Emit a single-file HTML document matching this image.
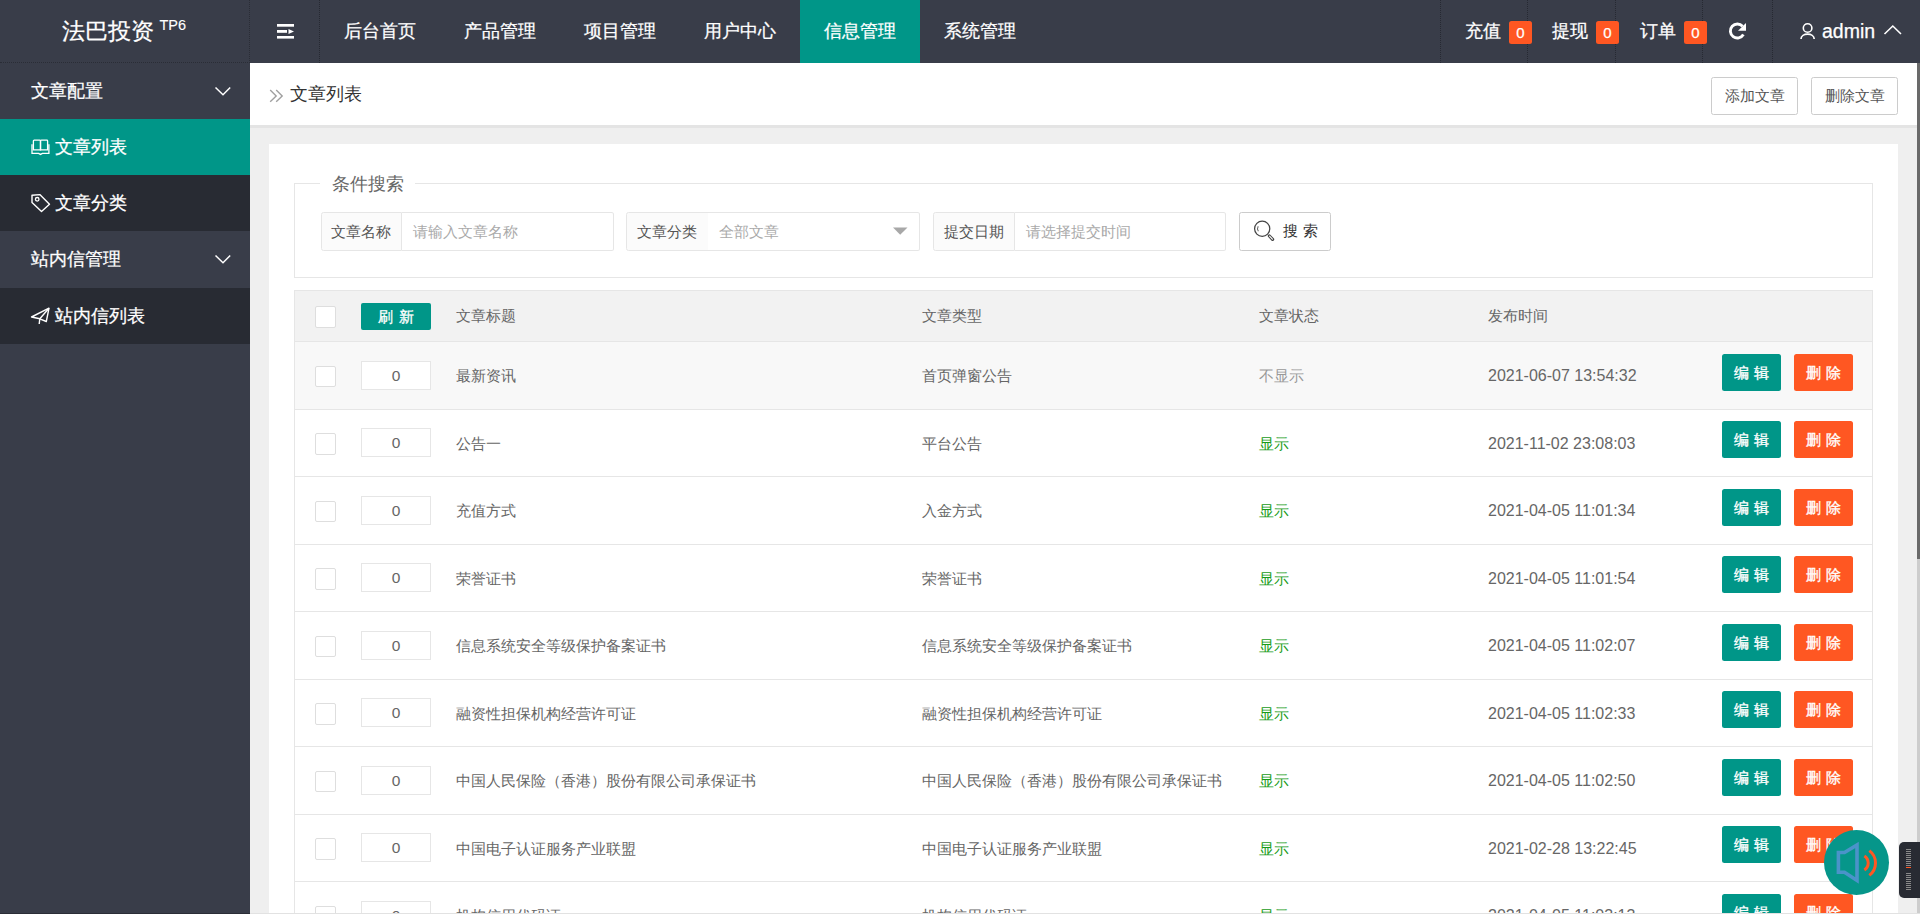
<!DOCTYPE html>
<html><head><meta charset="utf-8">
<style>
*{margin:0;padding:0;box-sizing:border-box}
html,body{width:1920px;height:914px;overflow:hidden}
body{position:relative;background:#efefef;font-family:"Liberation Sans",sans-serif;color:#666}
#hdr,#side{-webkit-text-stroke:0.25px currentColor}
.abs{position:absolute}
#hdr{left:0;top:0;width:1920px;height:62.5px;background:#393d49}
#logo{left:0;top:0;width:250px;height:62.5px;border-right:1px dotted #2a2d36;border-bottom:1px dotted #2a2d36}
#logo .t{position:absolute;left:62px;top:17px;font-size:23px;line-height:28px;color:#fff;white-space:nowrap}
#logo sup{position:absolute;left:97.5px;top:1px;font-size:14.5px;line-height:15px;-webkit-text-stroke:0.1px #fff}
.nav{top:0;height:62.5px;line-height:62.5px;color:#fff;font-size:17.5px;text-align:center;white-space:nowrap}
.sep{position:absolute;top:0;width:1px;height:62.5px;border-left:1px dotted #262932}
#side{left:0;top:62.5px;width:250px;height:851.5px;background:#393d49}
.si{position:absolute;left:0;width:250px;height:56.25px;line-height:56.25px;color:#fff;font-size:17.5px;white-space:nowrap}
.si .tx{position:absolute;left:31px;top:0}
.si.child .tx{left:55px}
.si svg{position:absolute}
#bc{left:250px;top:62.5px;width:1667px;height:62.5px;background:#fff}
#bcb{left:250px;top:125px;width:1667px;height:3px;background:#e4e4e4}
.btn-o{position:absolute;top:14.5px;height:38px;width:87px;border:1px solid #cccccc;border-radius:2.5px;background:#fff;color:#555;font-size:15px;line-height:36px;text-align:center;white-space:nowrap}
#scroll{left:1917px;top:62.5px;width:3px;height:851.5px;background:#cdcdcd}
#thumb{left:1917px;top:62.5px;width:3px;height:496px;background:#6a6a6a}
.badge{position:absolute;top:21px;width:23px;height:23px;background:#ff5722;border-radius:2.5px;color:#fff;font-size:15px;line-height:23px;text-align:center}

.lab{position:absolute;top:211.5px;height:39px;border:1px solid #e6e6e6;border-radius:2.5px 0 0 2.5px;background:#fbfbfb;color:#555;font-size:15px;line-height:37px;text-align:center;white-space:nowrap}
.inp{position:absolute;top:211.5px;height:39px;border:1px solid #e6e6e6;border-left:none;border-radius:0 2.5px 2.5px 0;background:#fff;color:#aaa;font-size:15px;line-height:37px;padding-left:11px;white-space:nowrap}
.cb{position:absolute;width:21.5px;height:21.5px;border:1px solid #dedede;border-radius:2px;background:#fff}
.th{position:absolute;top:290px;line-height:52px;font-size:15px;color:#666;white-space:nowrap}
.td{position:absolute;margin-top:0.8px;line-height:67.5px;font-size:15px;color:#666;white-space:nowrap}
.dt{font-size:16px}
.si0{position:absolute;width:70px;height:29px;border:1px solid #e6e6e6;background:#fff;font-size:15.5px;line-height:27px;text-align:center;color:#666}
.bt{position:absolute;margin-top:0.6px;width:59px;height:37px;border-radius:2.5px;color:#fff;font-size:15px;line-height:37px;text-align:center;letter-spacing:5px;padding-left:5px;white-space:nowrap;-webkit-text-stroke:0.35px #fff}
#card{left:268.75px;top:143.75px;width:1629.5px;height:800px;background:#fff}
</style></head><body>

<div id="hdr" class="abs">
  <div id="logo" class="abs"><div class="t">法巴投资<sup>TP6</sup></div></div>
  <div class="sep" style="left:319px"></div>
  <svg class="abs" style="left:277px;top:24px" width="17" height="15" viewBox="0 0 17 15">
    <rect x="0" y="0" width="17" height="2.7" fill="#fff"/>
    <rect x="0" y="6" width="10" height="2.8" fill="#fff"/>
    <path d="M11.5 5 L17 7.4 L11.5 9.9 Z" fill="#fff"/>
    <rect x="0" y="12" width="17" height="2.6" fill="#fff"/>
  </svg>
  <div class="nav abs" style="left:320px;width:120px">后台首页</div>
  <div class="nav abs" style="left:440px;width:120px">产品管理</div>
  <div class="nav abs" style="left:560px;width:120px">项目管理</div>
  <div class="nav abs" style="left:680px;width:120px">用户中心</div>
  <div class="nav abs" style="left:800px;width:120px;background:#009688">信息管理</div>
  <div class="nav abs" style="left:920px;width:120px">系统管理</div>
  <div class="sep" style="left:1440px"></div>
  <div class="sep" style="left:1527px"></div>
  <div class="sep" style="left:1615px"></div>
  <div class="sep" style="left:1702px"></div>
  <div class="sep" style="left:1772px"></div>
  <div class="abs" style="left:1465px;top:0;line-height:62.5px;font-size:17.5px;color:#fff;white-space:nowrap">充值</div>
  <div class="badge" style="left:1509px">0</div>
  <div class="abs" style="left:1552px;top:0;line-height:62.5px;font-size:17.5px;color:#fff;white-space:nowrap">提现</div>
  <div class="badge" style="left:1596px">0</div>
  <div class="abs" style="left:1640px;top:0;line-height:62.5px;font-size:17.5px;color:#fff;white-space:nowrap">订单</div>
  <div class="badge" style="left:1684px">0</div>
  <svg class="abs" style="left:1727px;top:21px" width="22" height="20" viewBox="0 0 22 20">
    <path d="M16.4 13.5 A7 7 0 1 1 15.6 5.3" fill="none" stroke="#fff" stroke-width="2.9"/>
    <path d="M19 2 L19 9.7 L11 9.7 Z" fill="#fff"/>
  </svg>
  <svg class="abs" style="left:1799px;top:21px" width="18" height="20" viewBox="0 0 18 20">
    <circle cx="8.6" cy="7" r="4.3" fill="none" stroke="#fff" stroke-width="1.6"/>
    <path d="M2 18 C2 11.5 15.2 11.5 15.2 18" fill="none" stroke="#fff" stroke-width="1.7"/>
  </svg>
  <div class="abs" style="left:1822px;top:0;line-height:62.5px;font-size:19.5px;color:#fff">admin</div>
  <svg class="abs" style="left:1883px;top:24px" width="20" height="12" viewBox="0 0 20 12"><path d="M1.5 10 L9.8 2 L18 10" fill="none" stroke="#fff" stroke-width="1.6"/></svg>
</div>


<div id="side" class="abs">
  <div class="si" style="top:0"><span class="tx">文章配置</span>
    <svg style="left:214px;top:23px" width="18" height="10" viewBox="0 0 18 10"><path d="M1.5 1.5 L9 8.7 L16.2 1.5" fill="none" stroke="#fff" stroke-width="1.5"/></svg>
  </div>
  <div class="si child" style="top:56.25px;background:#009688"><span class="tx">文章列表</span><svg style="left:30px;top:20px" width="21" height="17" viewBox="0 0 21 17">
<path d="M3.4 2 Q3.4 1.2 4.2 1.2 L9.6 1.2 Q10.5 1.2 10.5 2 L10.5 10.8 L3.4 10.8 Z" fill="none" stroke="#fff" stroke-width="1.3"/>
<path d="M10.5 2 Q10.5 1.2 11.4 1.2 L16.8 1.2 Q17.6 1.2 17.6 2 L17.6 10.8 L10.5 10.8 Z" fill="none" stroke="#fff" stroke-width="1.3"/>
<path d="M2 5.3 L2 14.4 L8.6 14.4 L10.5 15.4 L12.4 14.4 L18.9 14.4 L18.9 5.3" fill="none" stroke="#fff" stroke-width="1.3"/>
</svg></div>
  <div class="si child" style="top:112.5px;background:#282b33"><span class="tx">文章分类</span><svg style="left:30px;top:18px" width="22" height="20" viewBox="0 0 22 20">
<path d="M2 2.2 L9.8 1.6 L19.5 11.2 L11.5 18.6 L2 9.4 Z" fill="none" stroke="#fff" stroke-width="1.4" stroke-linejoin="round"/>
<circle cx="7.2" cy="6.3" r="1.8" fill="none" stroke="#fff" stroke-width="1.3"/>
</svg></div>
  <div class="si" style="top:168.75px"><span class="tx">站内信管理</span>
    <svg style="left:214px;top:23px" width="18" height="10" viewBox="0 0 18 10"><path d="M1.5 1.5 L9 8.7 L16.2 1.5" fill="none" stroke="#fff" stroke-width="1.5"/></svg>
  </div>
  <div class="si child" style="top:225px;background:#282b33"><span class="tx">站内信列表</span><svg style="left:30px;top:19px" width="22" height="18" viewBox="0 0 22 18">
<path d="M1.5 10 L19 1.2 L16.3 14.5 L9.8 11.8 Z" fill="none" stroke="#fff" stroke-width="1.4" stroke-linejoin="round"/>
<path d="M9.8 11.8 L19 1.2 M9.8 11.8 L9.2 17" fill="none" stroke="#fff" stroke-width="1.4"/>
</svg></div>
</div>

<div id="bc" class="abs">
<svg class="abs" style="left:19px;top:26px" width="16" height="14" viewBox="0 0 16 14">
<path d="M1.2 1 L7.2 6.9 L1.2 12.8 M7.2 1 L13.2 6.9 L7.2 12.8" fill="none" stroke="#a0a0a0" stroke-width="1.4"/>
</svg>
  <div class="abs" style="left:40px;top:0;line-height:62.5px;font-size:18px;color:#333">文章列表</div>
  <div class="btn-o" style="left:1461px">添加文章</div>
  <div class="btn-o" style="left:1561px">删除文章</div>
</div>
<div id="bcb" class="abs"></div>
<div id="scroll" class="abs"></div>
<div id="thumb" class="abs"></div>

<div id="card" class="abs"></div>

<div class="abs" style="left:293.75px;top:183px;width:1578.75px;height:95px;border:1px solid #e6e6e6"></div>
<div class="abs" style="left:320px;top:170px;width:95px;height:26px;background:#fff"></div>
<div class="abs" style="left:332px;top:170px;font-size:18px;line-height:28px;color:#666">条件搜索</div>

<div class="lab" style="left:320.5px;width:81.5px">文章名称</div>
<div class="inp" style="left:401.5px;width:212px">请输入文章名称</div>
<div class="lab" style="left:626px;width:82.5px">文章分类</div>
<div class="inp" style="left:708px;width:211.5px">全部文章</div>
<svg class="abs" style="left:893px;top:227px" width="15" height="8" viewBox="0 0 15 8"><path d="M0 0.5 L14.5 0.5 L7.2 7.8 Z" fill="#a8a8a8"/></svg>
<div class="lab" style="left:933px;width:81.5px">提交日期</div>
<div class="inp" style="left:1014.5px;width:211px">请选择提交时间</div>
<div class="abs" style="left:1239px;top:211.5px;width:91.75px;height:39px;border:1px solid #cccccc;border-radius:2.5px;background:#fff"></div>
<svg class="abs" style="left:1252px;top:219px" width="24" height="24" viewBox="0 0 24 24">
  <circle cx="10.2" cy="9.8" r="7.6" fill="none" stroke="#444" stroke-width="1.25"/>
  <path d="M6.2 7.3 A4.6 4.6 0 0 0 6.4 12.3" fill="none" stroke="#666" stroke-width="1.1"/>
  <path d="M17.4 17 L20.6 20.4" fill="none" stroke="#444" stroke-width="3.2" stroke-linecap="round"/>
  <path d="M17.6 17.2 L20.4 20.2" fill="none" stroke="#fff" stroke-width="1.1" stroke-linecap="round"/>
</svg>
<div class="abs" style="left:1283px;top:216px;font-size:15px;line-height:30px;color:#333;letter-spacing:4.5px;white-space:nowrap">搜索</div>

<div class="abs" style="left:293.75px;top:290px;width:1578.75px;height:52px;background:#f2f2f2;border:1px solid #e6e6e6;border-bottom:none"></div>
<div class="cb" style="left:314.5px;top:306px"></div>
<div class="abs" style="left:361px;top:303px;width:70px;height:27px;background:#009688;border-radius:2px;color:#fff;font-size:15px;line-height:27px;text-align:center;letter-spacing:6px;padding-left:6px;-webkit-text-stroke:0.3px #fff">刷新</div>
<div class="th" style="left:456px">文章标题</div>
<div class="th" style="left:922px">文章类型</div>
<div class="th" style="left:1259px">文章状态</div>
<div class="th" style="left:1488px">发布时间</div>
<div class="abs" style="left:293.75px;top:341.40px;width:1578.75px;height:67.5px;background:#f8f8f8;border:1px solid #e6e6e6;border-bottom:none"></div>
<div class="cb" style="left:314.5px;top:365.80px"></div>
<div class="si0" style="left:361px;top:360.90px">0</div>
<div class="td" style="left:456px;top:341.40px">最新资讯</div>
<div class="td" style="left:922px;top:341.40px">首页弹窗公告</div>
<div class="td" style="left:1259px;top:341.40px;color:#999">不显示</div>
<div class="td dt" style="left:1488px;top:341.40px">2021-06-07 13:54:32</div>
<div class="bt" style="left:1722px;top:353.40px;background:#009688">编辑</div>
<div class="bt" style="left:1794px;top:353.40px;background:#ff5722">删除</div>
<div class="abs" style="left:293.75px;top:408.90px;width:1578.75px;height:67.5px;background:#fff;border:1px solid #e6e6e6;border-bottom:none"></div>
<div class="cb" style="left:314.5px;top:433.30px"></div>
<div class="si0" style="left:361px;top:428.40px">0</div>
<div class="td" style="left:456px;top:408.90px">公告一</div>
<div class="td" style="left:922px;top:408.90px">平台公告</div>
<div class="td" style="left:1259px;top:408.90px;color:#189c18">显示</div>
<div class="td dt" style="left:1488px;top:408.90px">2021-11-02 23:08:03</div>
<div class="bt" style="left:1722px;top:420.90px;background:#009688">编辑</div>
<div class="bt" style="left:1794px;top:420.90px;background:#ff5722">删除</div>
<div class="abs" style="left:293.75px;top:476.40px;width:1578.75px;height:67.5px;background:#fff;border:1px solid #e6e6e6;border-bottom:none"></div>
<div class="cb" style="left:314.5px;top:500.80px"></div>
<div class="si0" style="left:361px;top:495.90px">0</div>
<div class="td" style="left:456px;top:476.40px">充值方式</div>
<div class="td" style="left:922px;top:476.40px">入金方式</div>
<div class="td" style="left:1259px;top:476.40px;color:#189c18">显示</div>
<div class="td dt" style="left:1488px;top:476.40px">2021-04-05 11:01:34</div>
<div class="bt" style="left:1722px;top:488.40px;background:#009688">编辑</div>
<div class="bt" style="left:1794px;top:488.40px;background:#ff5722">删除</div>
<div class="abs" style="left:293.75px;top:543.90px;width:1578.75px;height:67.5px;background:#fff;border:1px solid #e6e6e6;border-bottom:none"></div>
<div class="cb" style="left:314.5px;top:568.30px"></div>
<div class="si0" style="left:361px;top:563.40px">0</div>
<div class="td" style="left:456px;top:543.90px">荣誉证书</div>
<div class="td" style="left:922px;top:543.90px">荣誉证书</div>
<div class="td" style="left:1259px;top:543.90px;color:#189c18">显示</div>
<div class="td dt" style="left:1488px;top:543.90px">2021-04-05 11:01:54</div>
<div class="bt" style="left:1722px;top:555.90px;background:#009688">编辑</div>
<div class="bt" style="left:1794px;top:555.90px;background:#ff5722">删除</div>
<div class="abs" style="left:293.75px;top:611.40px;width:1578.75px;height:67.5px;background:#fff;border:1px solid #e6e6e6;border-bottom:none"></div>
<div class="cb" style="left:314.5px;top:635.80px"></div>
<div class="si0" style="left:361px;top:630.90px">0</div>
<div class="td" style="left:456px;top:611.40px">信息系统安全等级保护备案证书</div>
<div class="td" style="left:922px;top:611.40px">信息系统安全等级保护备案证书</div>
<div class="td" style="left:1259px;top:611.40px;color:#189c18">显示</div>
<div class="td dt" style="left:1488px;top:611.40px">2021-04-05 11:02:07</div>
<div class="bt" style="left:1722px;top:623.40px;background:#009688">编辑</div>
<div class="bt" style="left:1794px;top:623.40px;background:#ff5722">删除</div>
<div class="abs" style="left:293.75px;top:678.90px;width:1578.75px;height:67.5px;background:#fff;border:1px solid #e6e6e6;border-bottom:none"></div>
<div class="cb" style="left:314.5px;top:703.30px"></div>
<div class="si0" style="left:361px;top:698.40px">0</div>
<div class="td" style="left:456px;top:678.90px">融资性担保机构经营许可证</div>
<div class="td" style="left:922px;top:678.90px">融资性担保机构经营许可证</div>
<div class="td" style="left:1259px;top:678.90px;color:#189c18">显示</div>
<div class="td dt" style="left:1488px;top:678.90px">2021-04-05 11:02:33</div>
<div class="bt" style="left:1722px;top:690.90px;background:#009688">编辑</div>
<div class="bt" style="left:1794px;top:690.90px;background:#ff5722">删除</div>
<div class="abs" style="left:293.75px;top:746.40px;width:1578.75px;height:67.5px;background:#fff;border:1px solid #e6e6e6;border-bottom:none"></div>
<div class="cb" style="left:314.5px;top:770.80px"></div>
<div class="si0" style="left:361px;top:765.90px">0</div>
<div class="td" style="left:456px;top:746.40px">中国人民保险（香港）股份有限公司承保证书</div>
<div class="td" style="left:922px;top:746.40px">中国人民保险（香港）股份有限公司承保证书</div>
<div class="td" style="left:1259px;top:746.40px;color:#189c18">显示</div>
<div class="td dt" style="left:1488px;top:746.40px">2021-04-05 11:02:50</div>
<div class="bt" style="left:1722px;top:758.40px;background:#009688">编辑</div>
<div class="bt" style="left:1794px;top:758.40px;background:#ff5722">删除</div>
<div class="abs" style="left:293.75px;top:813.90px;width:1578.75px;height:67.5px;background:#fff;border:1px solid #e6e6e6;border-bottom:none"></div>
<div class="cb" style="left:314.5px;top:838.30px"></div>
<div class="si0" style="left:361px;top:833.40px">0</div>
<div class="td" style="left:456px;top:813.90px">中国电子认证服务产业联盟</div>
<div class="td" style="left:922px;top:813.90px">中国电子认证服务产业联盟</div>
<div class="td" style="left:1259px;top:813.90px;color:#189c18">显示</div>
<div class="td dt" style="left:1488px;top:813.90px">2021-02-28 13:22:45</div>
<div class="bt" style="left:1722px;top:825.90px;background:#009688">编辑</div>
<div class="bt" style="left:1794px;top:825.90px;background:#ff5722">删除</div>
<div class="abs" style="left:293.75px;top:881.40px;width:1578.75px;height:67.5px;background:#fff;border:1px solid #e6e6e6;border-bottom:none"></div>
<div class="cb" style="left:314.5px;top:905.80px"></div>
<div class="si0" style="left:361px;top:900.90px">0</div>
<div class="td" style="left:456px;top:881.40px">机构信用代码证</div>
<div class="td" style="left:922px;top:881.40px">机构信用代码证</div>
<div class="td" style="left:1259px;top:881.40px;color:#189c18">显示</div>
<div class="td dt" style="left:1488px;top:881.40px">2021-04-05 11:03:13</div>
<div class="bt" style="left:1722px;top:893.40px;background:#009688">编辑</div>
<div class="bt" style="left:1794px;top:893.40px;background:#ff5722">删除</div>

<div class="abs" style="left:1824px;top:830px;width:65px;height:65px;border-radius:50%;background:#06968a"></div>
<svg class="abs" style="left:1834px;top:840px" width="46" height="46" viewBox="0 0 46 46">
  <path d="M4.4 12.5 L10.5 12.5 L23 5 L23 40.4 L10.5 32.3 L4.4 32.3 Z" fill="none" stroke="#4a93c9" stroke-width="3.6" stroke-linejoin="miter"/>
  <path d="M30.35 16.05 A8.2 8.2 0 0 1 30.35 29.95" fill="none" stroke="#ff5722" stroke-width="3"/>
  <path d="M35.33 10.62 A15.5 15.5 0 0 1 35.33 35.38" fill="none" stroke="#ff5722" stroke-width="3"/>
</svg>
<div class="abs" style="left:1899px;top:842px;width:30px;height:56px;border-radius:5px;background:#282b33"></div>
<div class="abs" style="left:1906px;top:849px;width:5.3px;height:17.5px;background:repeating-linear-gradient(#8a8a8a 0 1px,transparent 1px 2px)"></div>
<div class="abs" style="left:1906px;top:867px;width:5.3px;height:1px;background:#ff5722"></div>
<div class="abs" style="left:1906px;top:872.5px;width:5.3px;height:17.5px;background:repeating-linear-gradient(#8a8a8a 0 1px,transparent 1px 2px)"></div>


<div class="abs" style="left:250px;top:913px;width:1670px;height:1px;background:#e2e2e2"></div>
<div class="abs" style="left:0;top:912.5px;width:250px;height:1.5px;background:#2a2d36"></div>
</body></html>
